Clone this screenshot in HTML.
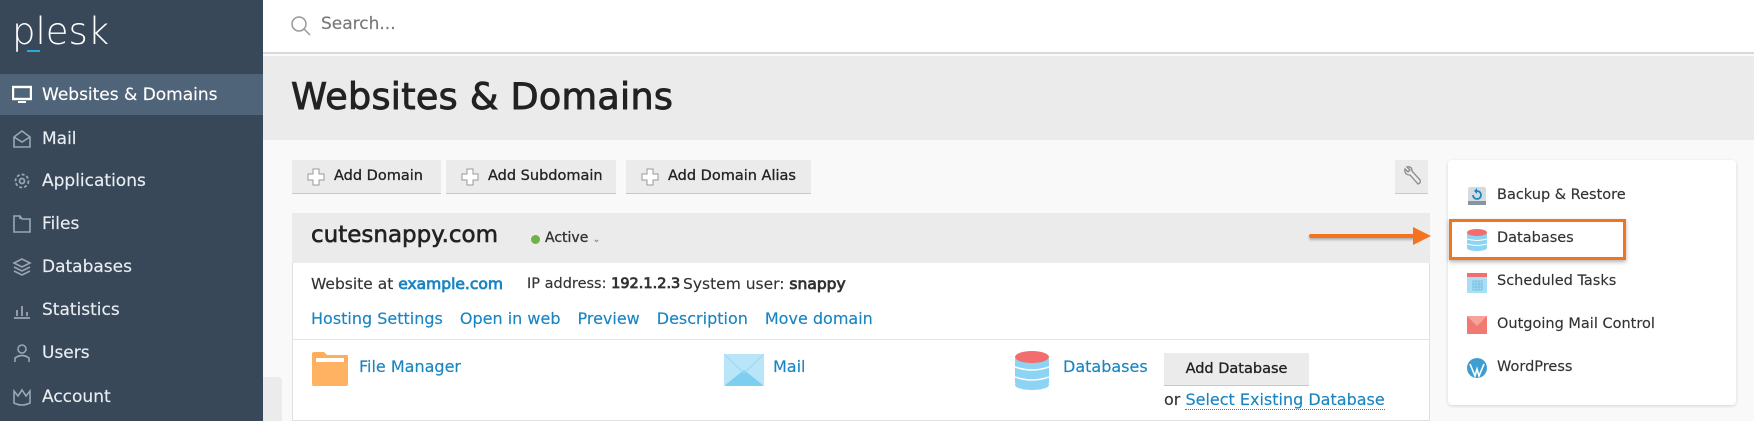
<!DOCTYPE html>
<html><head><style>
*{margin:0;padding:0;box-sizing:border-box}
body{width:1754px;height:421px;overflow:hidden;position:relative;background:#f9f9f9;font-family:"DejaVu Sans","Liberation Sans",sans-serif;color:#222;-webkit-text-stroke:0.15px}
.a{position:absolute}
#sb{left:0;top:0;width:263px;height:421px;background:#384858}
.mi{position:absolute;left:0;width:263px;height:42px;color:#e8edf2;font-size:17px;line-height:42px;padding-left:42px}
.mi svg{position:absolute;left:12px;top:11px}
.btn{position:absolute;top:160px;height:34px;background:#ebebeb;border-bottom:1px solid #c8c8c8;font-size:14.5px;line-height:33px;color:#222;padding-left:42px;-webkit-text-stroke:0.3px}
.plus{position:absolute;left:15px;top:8px}
.lnk{color:#1a85c1}
.ri{position:absolute;left:1497px;font-size:14.5px;color:#333}
b{font-weight:normal;-webkit-text-stroke:0.8px}
</style></head><body>
<div id="sb" class="a">
<div class="a" style="left:12px;top:10px;color:#fff;font-size:37px;font-family:'DejaVu Sans',sans-serif;font-weight:300;-webkit-text-stroke:0">plesk</div>
<div class="a" style="left:27px;top:50px;width:13px;height:2px;background:#28aade"></div>
<div class="a" style="left:0;top:74px;width:263px;height:41px;background:#4f6478"></div>
<div class="mi" style="top:74px;color:#fff"><svg width="20" height="20" viewBox="0 0 20 20"><rect x="1" y="2" width="18" height="12" fill="none" stroke="#fff" stroke-width="2.4"/><rect x="6" y="16" width="8" height="2" fill="#fff"/></svg>Websites &amp; Domains</div>
<div class="mi" style="top:118px"><svg width="20" height="20" viewBox="0 0 20 20" fill="none" stroke="#9aa6b2" stroke-width="1.6"><path d="M2 8L10 2L18 8V18H2Z M2 8L10 13L18 8"/></svg>Mail</div>
<div class="mi" style="top:160px"><svg width="20" height="20" viewBox="0 0 20 20" fill="none" stroke="#9aa6b2" stroke-width="1.8"><circle cx="10" cy="10" r="6.5" stroke-dasharray="3 2"/><circle cx="10" cy="10" r="2.5"/></svg>Applications</div>
<div class="mi" style="top:203px"><svg width="20" height="20" viewBox="0 0 20 20" fill="none" stroke="#9aa6b2" stroke-width="1.6"><path d="M2 2H8L10 5H18V18H2Z M8 2V5"/></svg>Files</div>
<div class="mi" style="top:246px"><svg width="20" height="20" viewBox="0 0 20 20" fill="none" stroke="#9aa6b2" stroke-width="1.6"><path d="M2 6L10 2L18 6L10 10Z M2 10L10 14L18 10 M2 14L10 18L18 14"/></svg>Databases</div>
<div class="mi" style="top:289px"><svg width="20" height="20" viewBox="0 0 20 20" fill="none" stroke="#9aa6b2" stroke-width="1.8"><path d="M2 18H18 M5 16V10 M10 16V6 M15 16V12"/></svg>Statistics</div>
<div class="mi" style="top:332px"><svg width="20" height="20" viewBox="0 0 20 20" fill="none" stroke="#9aa6b2" stroke-width="1.6"><circle cx="10" cy="6" r="4"/><path d="M3 19V15Q10 10 17 15V19"/></svg>Users</div>
<div class="mi" style="top:376px"><svg width="20" height="20" viewBox="0 0 20 20" fill="none" stroke="#9aa6b2" stroke-width="1.6"><path d="M2 4L6 9L10 3L14 9L18 4V16Q10 20 2 16Z"/></svg>Account</div>
</div>
<div class="a" style="left:263px;top:377px;width:19px;height:44px;background:#ebebeb;border-radius:0 4px 0 0"></div>
<div class="a" style="left:263px;top:0;width:1491px;height:54px;background:#fff;border-bottom:2px solid #d8d8d8"></div>
<svg class="a" style="left:290px;top:15px" width="22" height="22" viewBox="0 0 22 22" fill="none" stroke="#999" stroke-width="1.5"><circle cx="9" cy="9" r="7"/><path d="M14 14L20 20"/></svg>
<div class="a" style="left:321px;top:14px;font-size:17px;color:#777">Search...</div>
<div class="a" style="left:263px;top:56px;width:1491px;height:84px;background:#ebebeb"></div>
<div class="a" style="left:291px;top:75px;font-size:36.5px;color:#222;letter-spacing:0.3px;-webkit-text-stroke:0.9px #222">Websites &amp; Domains</div>

<div class="btn" style="left:292px;width:149px"><svg class="plus" width="18" height="18" viewBox="0 0 18 18"><path d="M6 1H12V6H17V12H12V17H6V12H1V6H6Z" fill="#fff" stroke="#999"/></svg>Add Domain</div>
<div class="btn" style="left:446px;width:170px"><svg class="plus" width="18" height="18" viewBox="0 0 18 18"><path d="M6 1H12V6H17V12H12V17H6V12H1V6H6Z" fill="#fff" stroke="#999"/></svg>Add Subdomain</div>
<div class="btn" style="left:626px;width:185px"><svg class="plus" width="18" height="18" viewBox="0 0 18 18"><path d="M6 1H12V6H17V12H12V17H6V12H1V6H6Z" fill="#fff" stroke="#999"/></svg>Add Domain Alias</div>
<div class="a" style="left:1395px;top:160px;width:33px;height:34px;background:#ebebeb;border-bottom:1px solid #c8c8c8"></div>
<svg class="a" style="left:1402px;top:166px" width="20" height="22" viewBox="0 0 20 22" fill="none" stroke="#888" stroke-width="1.3"><path d="M3 3L6 6L8 4L5 1Q10 0 10 5L18 14Q19 17 16 18L8 9Q2 9 3 3Z"/></svg>

<div class="a" style="left:292px;top:213px;width:1138px;height:208px;background:#fff;border:1px solid #e0e0e0"></div>
<div class="a" style="left:292px;top:213px;width:1138px;height:50px;background:#ebebeb"></div>
<div class="a" style="left:311px;top:222px;font-size:23px;color:#222;-webkit-text-stroke:0.6px #222">cutesnappy.com</div>
<div class="a" style="left:531px;top:235px;width:9px;height:9px;border-radius:50%;background:#6db33f"></div>
<div class="a" style="left:545px;top:230px;font-size:14px;color:#333;-webkit-text-stroke:0.3px">Active <span style="font-size:9px;color:#888">&#8964;</span></div>
<div class="a" style="left:311px;top:275px;font-size:15.5px;color:#333;white-space:nowrap"><span>Website at <b class="lnk">example.com</b></span><span class="a" style="left:216px;font-size:14.5px;top:1px">IP address: <b>192.1.2.3</b></span><span class="a" style="left:372px">System user: <b>snappy</b></span></div>
<div class="a lnk" style="left:311px;top:309px;font-size:16px"><span>Hosting Settings</span><span style="margin-left:17px">Open in web</span><span style="margin-left:17px">Preview</span><span style="margin-left:17px">Description</span><span style="margin-left:17px">Move domain</span></div>
<div class="a" style="left:293px;top:339px;width:1136px;height:1px;background:#e4e4e4"></div>

<svg class="a" style="left:311px;top:352px" width="38" height="34" viewBox="0 0 38 34"><path d="M1 2Q1 0 3 0H13L16 3H36Q37 3 37 5V32Q37 34 35 34H3Q1 34 1 32Z" fill="#ffad5c"/><path d="M5 6H33V10H5Z" fill="#fff"/><path d="M1 10H37V32Q37 34 35 34H3Q1 34 1 32Z" fill="#ffb262"/></svg>
<div class="a lnk" style="left:359px;top:357px;font-size:16px">File Manager</div>
<svg class="a" style="left:724px;top:354px" width="40" height="32" viewBox="0 0 40 32"><rect width="40" height="32" rx="2" fill="#b8e6f8"/><path d="M0 32L20 16L40 32Z" fill="#7ecfef"/><path d="M0 0L20 19L40 0" fill="none" stroke="#9ad8f2" stroke-width="1"/></svg>
<div class="a lnk" style="left:773px;top:357px;font-size:16px">Mail</div>
<svg class="a" style="left:1015px;top:351px" width="34" height="39" viewBox="0 0 34 39"><rect x="0" y="5" width="34" height="30" rx="4" fill="#8dd3f3"/><ellipse cx="17" cy="34" rx="17" ry="5" fill="#8dd3f3"/><ellipse cx="17" cy="6" rx="17" ry="6" fill="#f26d6d"/><path d="M0 16Q17 22 34 16 M0 26Q17 32 34 26" stroke="#fff" stroke-width="1.5" fill="none"/></svg>
<div class="a lnk" style="left:1063px;top:357px;font-size:16px">Databases</div>
<div class="a" style="left:1164px;top:353px;width:145px;height:33px;background:#ebebeb;border-bottom:1px solid #c8c8c8;font-size:14.5px;line-height:32px;text-align:center;color:#222;-webkit-text-stroke:0.3px">Add Database</div>
<div class="a" style="left:1164px;top:390px;font-size:16px;color:#333">or <span class="lnk" style="border-bottom:1px dotted #1a85c1">Select Existing Database</span></div>

<div class="a" style="left:1448px;top:160px;width:288px;height:245px;background:#fff;border-radius:4px;box-shadow:0 1px 3px rgba(0,0,0,.15)"></div>
<svg class="a" style="left:1467px;top:186px" width="20" height="20" viewBox="0 0 20 20"><rect x="1" y="1" width="18" height="18" rx="2" fill="#d4dce2"/><rect x="1" y="15" width="18" height="4" fill="#8a949c"/><path d="M6 9A4 4 0 1 0 10 5" fill="none" stroke="#1a85c1" stroke-width="1.8"/><path d="M10 2V8L7 5Z" fill="#1a85c1"/></svg>
<div class="ri" style="top:187px">Backup &amp; Restore</div>
<svg class="a" style="left:1467px;top:229px" width="20" height="22" viewBox="0 0 20 22"><rect y="3" width="20" height="16" fill="#8dd3f3"/><ellipse cx="10" cy="19" rx="10" ry="3" fill="#8dd3f3"/><ellipse cx="10" cy="3.5" rx="10" ry="3.5" fill="#f26d6d"/><path d="M0 10Q10 13 20 10M0 15Q10 18 20 15" stroke="#fff" fill="none"/></svg>
<div class="ri" style="top:230px">Databases</div>
<div class="a" style="left:1449px;top:219px;width:177px;height:41px;border:3px solid #f47321;box-shadow:0 2px 4px rgba(0,0,0,.3)"></div>
<svg class="a" style="left:1467px;top:273px" width="20" height="20" viewBox="0 0 20 20"><rect width="20" height="20" fill="#a8def6"/><rect width="20" height="4" fill="#f26d6d"/><path d="M6 8H15V17H6ZM9 8V17M12 8V17M6 11H15M6 14H15" stroke="#6cb8dd" fill="none" stroke-width=".8"/></svg>
<div class="ri" style="top:273px">Scheduled Tasks</div>
<svg class="a" style="left:1467px;top:316px" width="20" height="18" viewBox="0 0 20 18"><rect width="20" height="18" fill="#f07a72"/><path d="M0 0L10 10L20 0" fill="#f6a39c"/></svg>
<div class="ri" style="top:316px">Outgoing Mail Control</div>
<svg class="a" style="left:1467px;top:358px" width="20" height="20" viewBox="0 0 20 20"><circle cx="10" cy="10" r="10" fill="#3f9ed1"/><path d="M3 6L8 18L10 11L12 18L17 6" stroke="#fff" stroke-width="1.6" fill="none"/></svg>
<div class="ri" style="top:359px">WordPress</div>

<div class="a" style="left:1309px;top:234px;width:110px;height:4px;background:#f47321;box-shadow:0 2px 2px rgba(0,0,0,.25);border-radius:2px"></div>
<svg class="a" style="left:1413px;top:227px" width="18" height="18" viewBox="0 0 18 18"><path d="M0 0L18 9L0 18Z" fill="#f47321"/></svg>
</body></html>
